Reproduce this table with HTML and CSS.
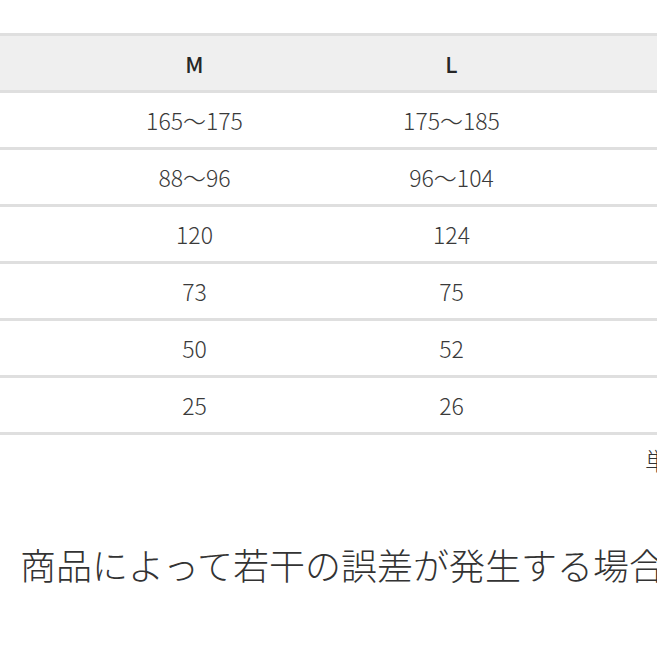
FILE: index.html
```html
<!DOCTYPE html>
<html lang="ja">
<head>
<meta charset="utf-8">
<title>サイズ表</title>
<link rel="stylesheet" href="styles.css">
</head>
<body>
<div class="page">
  <div class="chart">
    <table class="size-table">
      <thead>
        <tr><th></th><th>M</th><th>L</th><th></th></tr>
      </thead>
      <tbody>
        <tr><td></td><td>165〜175</td><td>175〜185</td><td></td></tr>
        <tr><td></td><td>88〜96</td><td>96〜104</td><td></td></tr>
        <tr><td></td><td>120</td><td>124</td><td></td></tr>
        <tr><td></td><td>73</td><td>75</td><td></td></tr>
        <tr><td></td><td>50</td><td>52</td><td></td></tr>
        <tr><td></td><td>25</td><td>26</td><td></td></tr>
      </tbody>
    </table>
  </div>
  <div class="unit">単位：cm</div>
  <p class="note">商品によって若干の誤差が発生する場合があります。</p>
</div>
</body>
</html>
```

FILE: styles.css
```css
html, body {
  margin: 0;
  padding: 0;
  background: #ffffff;
}

body {
  width: 657px;
  height: 657px;
  overflow: hidden;
  font-family: "Noto Sans CJK JP", "Noto Sans", sans-serif;
  color: #333333;
}

.page {
  width: 657px;
  overflow: hidden;
}

.chart {
  padding-top: 33px;
  margin-left: -191px;
  width: 1100px;
}

.size-table {
  border-collapse: collapse;
  table-layout: fixed;
  width: 1028px;
}

.size-table th,
.size-table td {
  width: 257px;
  height: 54px;
  padding: 0;
  text-align: center;
  vertical-align: middle;
  border-top: 3px solid #dfdfdf;
  border-bottom: 3px solid #dfdfdf;
}

.size-table th {
  background: #efefef;
  font-size: 22px;
  font-weight: 500;
  color: #262626;
}

.size-table td {
  font-size: 23px;
  font-weight: 300;
  color: #3a3a3a;
  line-height: 1;
}

.unit {
  padding-left: 645px;
  margin-top: 11px;
  white-space: nowrap;
  font-size: 24px;
  font-weight: 300;
  line-height: 28px;
  color: #333333;
}

.note {
  margin: 70px 0 0 20px;
  white-space: nowrap;
  font-size: 36px;
  font-weight: 300;
  line-height: 40px;
  color: #333333;
}
```
